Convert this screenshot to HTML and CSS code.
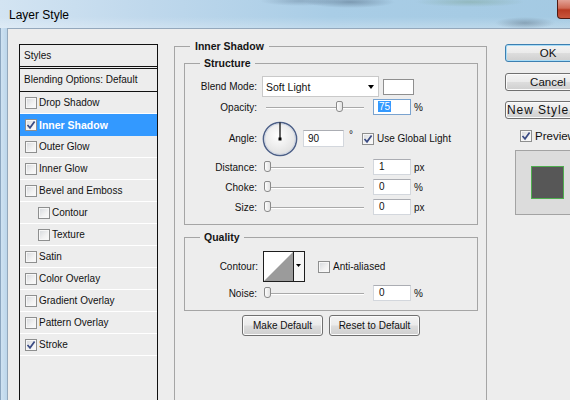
FILE: index.html
```html
<!DOCTYPE html>
<html>
<head>
<meta charset="utf-8">
<title>Layer Style</title>
<link rel="stylesheet" href="styles.css">
</head>
<body>
<div class="window">
  <div class="titlebar">
    <span class="title">Layer Style</span>
    <span class="close"></span>
  </div>
  <div class="frame">
    <div class="frame-left"></div>
    <div class="client">
      <div class="list">
        <div class="list-head">Styles</div>
        <div class="list-blend">Blending Options: Default</div>
        <div class="item"><span class="cb"></span>Drop Shadow</div>
        <div class="item sel"><span class="cb"><svg width="10" height="10" viewBox="0 0 10 10"><path d="M1.5 5 L4 7.8 L8.6 1.4" fill="none" stroke="#3a4b84" stroke-width="1.7"/></svg></span>Inner Shadow</div>
        <div class="item"><span class="cb"></span>Outer Glow</div>
        <div class="item"><span class="cb"></span>Inner Glow</div>
        <div class="item"><span class="cb"></span>Bevel and Emboss</div>
        <div class="item sub"><span class="cb"></span>Contour</div>
        <div class="item sub"><span class="cb"></span>Texture</div>
        <div class="item"><span class="cb"></span>Satin</div>
        <div class="item"><span class="cb"></span>Color Overlay</div>
        <div class="item"><span class="cb"></span>Gradient Overlay</div>
        <div class="item"><span class="cb"></span>Pattern Overlay</div>
        <div class="item"><span class="cb"><svg width="10" height="10" viewBox="0 0 10 10"><path d="M1.5 5 L4 7.8 L8.6 1.4" fill="none" stroke="#3a4b84" stroke-width="1.7"/></svg></span>Stroke</div>
      </div>

      <fieldset class="group outer">
        <legend>Inner Shadow</legend>

        <fieldset class="group structure">
          <legend>Structure</legend>
          <div class="row row-blend">
            <span class="lbl">Blend Mode:</span>
            <div class="select"><span>Soft Light</span><span class="arrow"></span></div>
            <div class="swatch"></div>
          </div>
          <div class="row">
            <span class="lbl">Opacity:</span>
            <div class="slider"><div class="track"></div><div class="thumb" style="left:74px"></div></div>
            <div class="field focus"><span class="hl">75</span></div>
            <span class="unit">%</span>
          </div>
          <div class="row row-angle">
            <span class="lbl">Angle:</span>
            <svg class="dial" width="36" height="36" viewBox="0 0 36 36">
              <defs>
                <radialGradient id="dg" cx="45%" cy="40%" r="65%">
                  <stop offset="0" stop-color="#ffffff"/>
                  <stop offset="1" stop-color="#dedede"/>
                </radialGradient>
              </defs>
              <circle cx="18" cy="18" r="16.6" fill="url(#dg)" stroke="#4d6088" stroke-width="1.5"/>
              <circle cx="18" cy="18" r="15.3" fill="none" stroke="#c9d2e2" stroke-width="0.8"/>
              <line x1="18" y1="18" x2="18" y2="1.5" stroke="#000" stroke-width="1.2"/>
              <rect x="16.5" y="16.5" width="3" height="3" fill="#000"/>
            </svg>
            <div class="field wide">90</div>
            <span class="deg">°</span>
            <span class="cb gl"><svg width="10" height="10" viewBox="0 0 10 10"><path d="M1.5 5 L4 7.8 L8.6 1.4" fill="none" stroke="#3a4b84" stroke-width="1.7"/></svg></span>
            <span class="cb-text">Use Global Light</span>
          </div>
          <div class="row">
            <span class="lbl">Distance:</span>
            <div class="slider"><div class="track"></div><div class="thumb" style="left:2px"></div></div>
            <div class="field">1</div>
            <span class="unit">px</span>
          </div>
          <div class="row">
            <span class="lbl">Choke:</span>
            <div class="slider"><div class="track"></div><div class="thumb" style="left:1.5px"></div></div>
            <div class="field">0</div>
            <span class="unit">%</span>
          </div>
          <div class="row">
            <span class="lbl">Size:</span>
            <div class="slider"><div class="track"></div><div class="thumb" style="left:1.5px"></div></div>
            <div class="field">0</div>
            <span class="unit">px</span>
          </div>
        </fieldset>

        <fieldset class="group quality">
          <legend>Quality</legend>
          <div class="row row-contour">
            <span class="lbl">Contour:</span>
            <svg class="contour" width="42" height="31" viewBox="0 0 42 31">
              <rect x="0.5" y="0.5" width="41" height="30" fill="#ffffff" stroke="#1e1e1e"/>
              <polygon points="1,30 30,1 30,30" fill="#9b9b9b"/>
              <rect x="30.5" y="1" width="10.5" height="29" fill="#f6f6f6"/>
              <line x1="30.5" y1="0.5" x2="30.5" y2="30.5" stroke="#1e1e1e"/>
              <polygon points="33,13 38,13 35.5,16" fill="#000"/>
            </svg>
            <span class="cb aa"></span>
            <span class="cb-text">Anti-aliased</span>
          </div>
          <div class="row row-noise">
            <span class="lbl">Noise:</span>
            <div class="slider"><div class="track"></div><div class="thumb" style="left:1.5px"></div></div>
            <div class="field">0</div>
            <span class="unit">%</span>
          </div>
        </fieldset>

        <div class="defaults">
          <button class="btn make">Make Default</button>
          <button class="btn reset">Reset to Default</button>
        </div>
      </fieldset>

      <div class="side">
        <button class="btn big ok">OK</button>
        <button class="btn big">Cancel</button>
        <button class="btn big ns">New Style...</button>
        <div class="preview-row"><span class="cb"><svg width="10" height="10" viewBox="0 0 10 10"><path d="M1.5 5 L4 7.8 L8.6 1.4" fill="none" stroke="#3a4b84" stroke-width="1.7"/></svg></span><span class="pv-text">Preview</span></div>
        <div class="preview-box"><div class="preview-square"></div></div>
      </div>
    </div>
  </div>
</div>
</body>
</html>
```

FILE: styles.css
```css
html, body {
  margin: 0;
  padding: 0;
}
body {
  width: 570px;
  height: 400px;
  overflow: hidden;
  background: #ededed;
  font-family: "Liberation Sans", Arial, sans-serif;
  font-size: 10px;
  color: #111;
}
.window {
  width: 600px;
  height: 400px;
  display: flex;
  flex-direction: column;
}
.titlebar {
  height: 28px;
  flex-shrink: 0;
  display: flex;
  align-items: flex-start;
  background:
    radial-gradient(ellipse 45px 6px at 350px 2px, rgba(70, 92, 115, 0.45), rgba(70, 92, 115, 0)),
    radial-gradient(ellipse 40px 5px at 300px 1px, rgba(70, 92, 115, 0.3), rgba(70, 92, 115, 0)),
    radial-gradient(ellipse 55px 5px at 470px 2px, rgba(110, 150, 120, 0.35), rgba(110, 150, 120, 0)),
    radial-gradient(ellipse 30px 6px at 525px 23px, rgba(60, 78, 96, 0.35), rgba(60, 78, 96, 0)),
    linear-gradient(180deg, rgba(255, 255, 255, 0) 60%, rgba(255, 255, 255, 0.25) 100%),
    linear-gradient(90deg, #d3e4f2 0%, #bfd8ec 25%, #a9cde6 55%, #a3c9e2 100%);
}
.title {
  margin: 8px 0 0 9px;
  font-size: 12px;
  line-height: 14px;
  color: #000;
}
.close {
  margin-left: auto;
  width: 43px;
  height: 19px;
  box-sizing: border-box;
  border: 1px solid #4e1a12;
  border-top: none;
  border-radius: 0 0 4px 4px;
  background: linear-gradient(180deg, #e2a195 0%, #cf6a55 45%, #b83a22 55%, #c9563c 100%);
}
.frame {
  flex: 1;
  display: flex;
  min-height: 0;
}
.frame-left {
  width: 7px;
  flex-shrink: 0;
  background: linear-gradient(90deg, #8ca6c0 0, #8ca6c0 1px, #cfe2f2 1px, #bcd6eb 7px);
}
.client {
  flex: 1;
  display: flex;
  align-items: flex-start;
  border-top: 1px solid #94a8bc;
  border-left: 1px solid #94a8bc;
  background: #ededed;
  padding: 11px 0 0 11px;
}

/* ---------- list ---------- */
.list {
  width: 139px;
  height: 400px;
  flex-shrink: 0;
  box-sizing: border-box;
  border: 1px solid #111;
  margin-top: 4px;
  margin-right: 16px;
}
.list-head {
  height: 21px;
  line-height: 21px;
  padding-left: 4px;
  border-bottom: 3px double #111;
}
.list-blend {
  height: 22px;
  line-height: 22px;
  padding-left: 4px;
  border-bottom: 1px solid #111;
}
.item {
  height: 21px;
  display: flex;
  align-items: center;
  padding-left: 5px;
  border-bottom: 1px solid #ffffff;
}
.item.sub {
  padding-left: 18px;
}
.item.sel {
  background: #3399ff;
  color: #fff;
  font-weight: bold;
  font-size: 10.5px;
  border-bottom-color: #3399ff;
}
.item .cb {
  margin-right: 2px;
}

/* ---------- checkbox ---------- */
.cb {
  width: 12px;
  height: 12px;
  flex-shrink: 0;
  box-sizing: border-box;
  border: 1px solid #8e8f8f;
  background: linear-gradient(135deg, #d5d8dc 0%, #f2f2f2 60%, #fbfbfb 100%);
  box-shadow: inset 0 0 0 1px #f7f7f7;
  display: inline-flex;
  align-items: center;
  justify-content: center;
}
.cb svg {
  display: block;
}
.cb-text {
  margin-left: 3px;
}

/* ---------- group boxes ---------- */
.group {
  margin: 0;
  border: 1px solid #a5a5a5;
  box-sizing: border-box;
  min-width: 0;
}
.group legend {
  font-weight: bold;
  font-size: 10.5px;
  line-height: 13px;
  color: #151515;
}
.outer {
  width: 313px;
  height: 420px;
  flex-shrink: 0;
  padding: 4px 8px 0 9px;
}
.outer > legend {
  padding: 0 5px;
  margin-left: 6px;
}
.structure > legend, .quality > legend {
  padding: 0 4px;
  margin-left: 15px;
}
.structure {
  padding: 6px 0 7px 0;
}
.quality {
  margin-top: 6px;
  padding: 7px 0 7px 0;
}

.row {
  height: 20px;
  display: flex;
  align-items: center;
}
.lbl {
  width: 72px;
  flex-shrink: 0;
  margin-right: 5px;
  text-align: right;
}
.row-blend {
  height: 21px;
}
.row-angle {
  height: 37px;
  margin-top: 3px;
}
.row-contour {
  height: 31px;
}
.row-contour .lbl {
  width: 73px;
}
.row-noise {
  margin-top: 1px;
}

.select {
  width: 117px;
  height: 21px;
  box-sizing: border-box;
  border: 1px solid #c9c9c9;
  background: #fff;
  display: flex;
  align-items: center;
  padding-left: 3px;
  font-size: 10.5px;
}
.arrow {
  margin-left: auto;
  margin-right: 4px;
  width: 0;
  height: 0;
  border-left: 3.5px solid transparent;
  border-right: 3.5px solid transparent;
  border-top: 4px solid #000;
}
.swatch {
  width: 31px;
  height: 16px;
  box-sizing: border-box;
  margin-left: 4px;
  border: 1px solid #8f8f8f;
  background: #fff;
}

.slider {
  position: relative;
  width: 106px;
  height: 14px;
  flex-shrink: 0;
  display: flex;
  align-items: center;
}
.track {
  margin: 0 4px;
  flex: 1;
  height: 1px;
  background: #a9a9a9;
  box-shadow: 0 1px 0 #ffffff;
}
.thumb {
  position: absolute;
  top: 1px;
  width: 7px;
  height: 11px;
  box-sizing: border-box;
  border: 1px solid #8a8a8a;
  border-radius: 2px 2px 3px 3px;
  background: linear-gradient(90deg, #fdfdfd, #e2e2e2);
}

.field {
  width: 38px;
  height: 16px;
  box-sizing: border-box;
  margin-left: 5px;
  border: 1px solid #d3d7dd;
  border-top-color: #abadb3;
  background: #fff;
  padding-left: 5px;
  line-height: 14px;
  font-size: 10px;
  flex-shrink: 0;
}
.field.focus {
  border-color: #7aa3cf;
  padding-left: 4px;
}
.field.wide {
  width: 41px;
  height: 17px;
  padding-left: 4px;
  line-height: 15px;
}
.hl {
  background: #3399ff;
  color: #fff;
  padding: 0 1px;
}
.unit {
  margin-left: 3px;
}
.dial {
  display: block;
  flex-shrink: 0;
}
.deg {
  align-self: flex-start;
  margin-top: 9px;
  margin-left: 5px;
  width: 4px;
}
.cb.gl {
  margin-left: 9px;
}
.contour {
  display: block;
  flex-shrink: 0;
}
.cb.aa {
  margin-left: 13px;
}

.defaults {
  display: flex;
  justify-content: center;
  gap: 6px;
  margin-top: 4px;
}
.btn {
  font-family: "Liberation Sans", Arial, sans-serif;
  font-size: 10px;
  color: #111;
  height: 21px;
  padding: 0;
  box-sizing: border-box;
  border: 1px solid #707070;
  border-radius: 3px;
  background: linear-gradient(180deg, #f3f3f3 0%, #ebebeb 48%, #dddddd 52%, #cfcfcf 100%);
  box-shadow: inset 0 0 0 1px #fbfbfb;
}
.btn.make {
  width: 81px;
}
.btn.reset {
  width: 91px;
}

/* ---------- right column ---------- */
.side {
  margin-left: 18px;
  margin-top: 4px;
  width: 86px;
  flex-shrink: 0;
  display: flex;
  flex-direction: column;
}
.btn.big {
  width: 86px;
  height: 18px;
  font-size: 11.5px;
  line-height: 14px;
  white-space: nowrap;
  overflow: hidden;
  margin-bottom: 10.5px;
}
.btn.ns {
  text-align: left;
  padding-left: 1px;
  font-size: 12px;
  letter-spacing: 0.9px;
}
.btn.ok {
  border-color: #3c7fb1;
  box-shadow: inset 0 0 0 1px #a9dcf6;
}
.preview-row {
  display: flex;
  align-items: center;
  height: 13px;
  padding-left: 15px;
  font-size: 11.5px;
  white-space: nowrap;
}
.pv-text {
  margin-left: 3px;
}
.preview-box {
  margin-top: 7px;
  margin-left: 10px;
  width: 80px;
  height: 65px;
  box-sizing: border-box;
  border: 1px solid #a3a3a3;
  background: #dcdcdc;
  padding: 15px 0 0 15px;
}
.preview-square {
  width: 33px;
  height: 33px;
  box-sizing: border-box;
  border: 1px solid #4fae4f;
  background: #575757;
}
```
